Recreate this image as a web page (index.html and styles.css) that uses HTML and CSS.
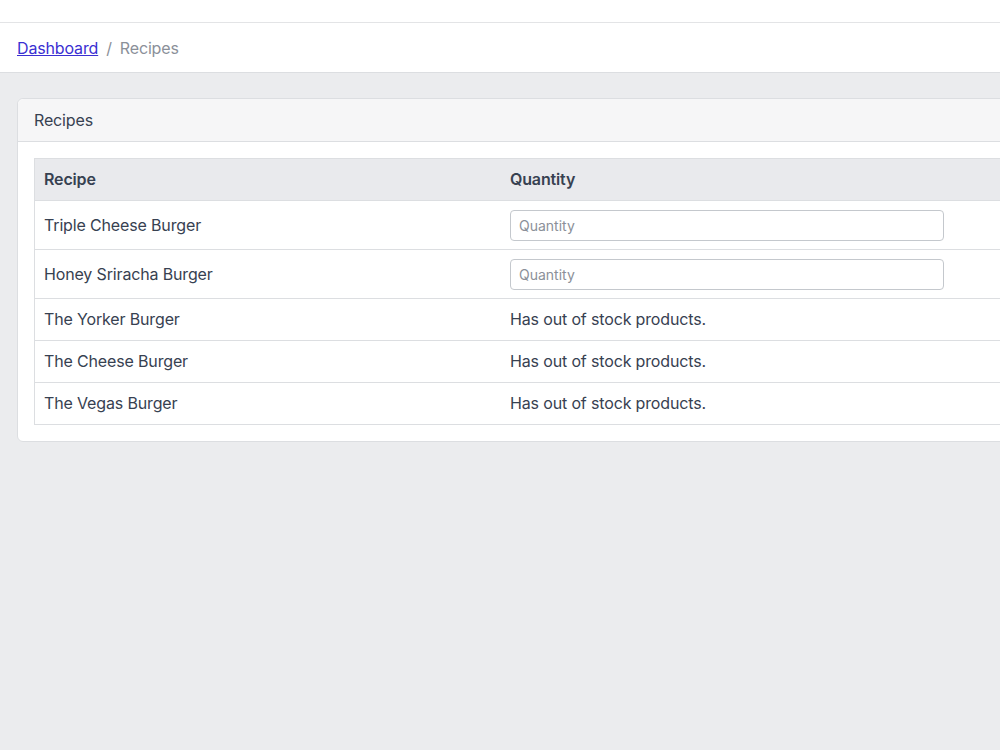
FILE: index.html
```html
<!DOCTYPE html>
<html>
<head>
  <title>Recipes</title>
  <link rel="stylesheet" href="styles.css">
</head>
<body>
  <div class="topbar"></div>
  <nav class="breadcrumb">
    <a href="#">Dashboard</a>
    <span class="sep">/</span>
    <span class="current">Recipes</span>
  </nav>

  <main class="content">
    <div class="card">
      <div class="card-header">Recipes</div>
      <div class="card-body">
        <table class="recipes">
          <thead>
            <tr>
              <th class="col-recipe">Recipe</th>
              <th>Quantity</th>
            </tr>
          </thead>
          <tbody>
            <tr>
              <td>Triple Cheese Burger</td>
              <td><input type="text" class="qty" placeholder="Quantity"></td>
            </tr>
            <tr>
              <td>Honey Sriracha Burger</td>
              <td><input type="text" class="qty" placeholder="Quantity"></td>
            </tr>
            <tr>
              <td>The Yorker Burger</td>
              <td>Has out of stock products.</td>
            </tr>
            <tr>
              <td>The Cheese Burger</td>
              <td>Has out of stock products.</td>
            </tr>
            <tr>
              <td>The Vegas Burger</td>
              <td>Has out of stock products.</td>
            </tr>
          </tbody>
        </table>
      </div>
    </div>
  </main>
</body>
</html>
```

FILE: styles.css
```css
html, body {
  margin: 0;
  overflow: hidden;
}

body {
  font-family: Inter, "Noto Sans", sans-serif;
  font-size: 16px;
  letter-spacing: -0.15px;
  color: #374151;
  background-color: #ebecee;
  height: 750px;
}

.topbar {
  height: 22px;
  background-color: #fff;
  border-bottom: 1px solid #e3e4e6;
}

.breadcrumb {
  height: 50px;
  box-sizing: border-box;
  background-color: #fff;
  border-bottom: 1px solid #dcdee1;
  padding: 0 17px;
  display: flex;
  align-items: center;
  gap: 8px;
}

.breadcrumb a {
  color: #3a2fd2;
  text-decoration: underline;
}

.breadcrumb .sep,
.breadcrumb .current {
  color: #8b9099;
}

.content {
  padding: 25px 17px;
}

.card {
  width: 1150px;
  background-color: #fff;
  border: 1px solid #dcdee1;
  border-radius: 6px;
}

.card-header {
  height: 43px;
  box-sizing: border-box;
  padding: 0 16px;
  display: flex;
  align-items: center;
  background-color: #f6f6f7;
  border-bottom: 1px solid #dcdee1;
  border-radius: 6px 6px 0 0;
}

.card-body {
  padding: 16px;
}

table.recipes {
  width: 100%;
  border-collapse: collapse;
  border: 1px solid #dcdee1;
}

.recipes th,
.recipes td {
  text-align: left;
  padding: 9px 9px;
  line-height: 23px;
  border-bottom: 1px solid #dcdee1;
}

.recipes th {
  font-weight: 600;
  background-color: #e9eaed;
}

.recipes .col-recipe {
  width: 448px;
}

.qty {
  display: block;
  width: 434px;
  height: 31px;
  box-sizing: border-box;
  margin: 0 0 -1px;
  padding: 0 8px;
  font-family: inherit;
  font-size: 14px;
  letter-spacing: 0;
  color: #374151;
  border: 1px solid #c4c8cd;
  border-radius: 4px;
  background: #fff;
}

.qty::placeholder {
  color: #8b9099;
}
```
